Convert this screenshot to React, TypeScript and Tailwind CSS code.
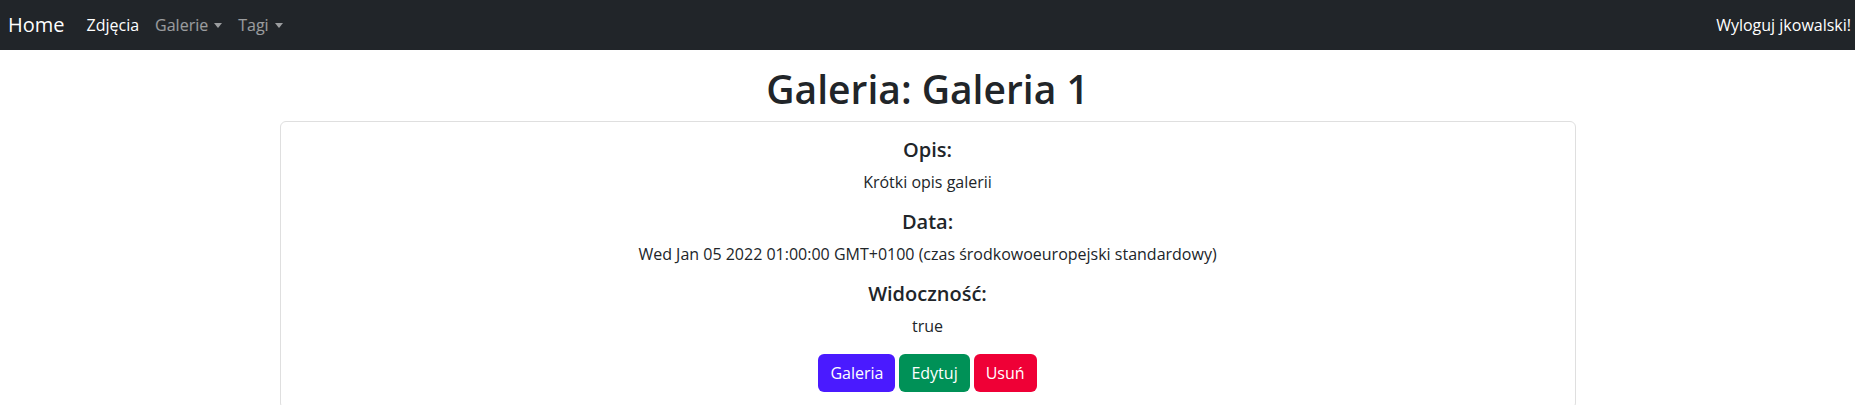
import React from "react";

const font = { fontFamily: '"Open Sans", "Noto Sans", sans-serif' };

function Caret() {
  return (
    <span className="ml-[6px] inline-block h-0 w-0 border-x-[4.5px] border-t-[5px] border-x-transparent border-t-current align-middle" />
  );
}

function Field({ label, value }: { label: string; value: string }) {
  return (
    <>
      <h5 className="mb-2 text-[20px] font-semibold leading-[24px]">{label}</h5>
      <p className="mb-4 text-[16px] leading-[24px]">{value}</p>
    </>
  );
}

export default function App() {
  return (
    <div className="min-h-screen bg-white text-[#212529]" style={font}>
      <nav className="flex h-[50px] items-center justify-between bg-[#212529] pl-2 pr-1">
        <div className="flex items-center">
          <a className="mr-[14px] text-[20px] leading-[30px] text-white">Home</a>
          <a className="px-2 text-[16px] leading-6 text-white">Zdjęcia</a>
          <a className="flex items-center px-2 text-[16px] leading-6 text-white/55">
            Galerie
            <Caret />
          </a>
          <a className="flex items-center px-2 text-[16px] leading-6 text-white/55">
            Tagi
            <Caret />
          </a>
        </div>
        <a className="text-[16px] leading-6 text-white">Wyloguj jkowalski!</a>
      </nav>

      <main className="mx-auto mt-[15px] w-[1320px] px-3">
        <h1 className="mb-2 text-center text-[39px] font-semibold leading-[48px]">
          Galeria: Galeria 1
        </h1>
        <div className="rounded-[6px] border border-[#dfdfdf] p-4 text-center">
          <Field label="Opis:" value="Krótki opis galerii" />
          <Field
            label="Data:"
            value="Wed Jan 05 2022 01:00:00 GMT+0100 (czas środkowoeuropejski standardowy)"
          />
          <Field label="Widoczność:" value="true" />
          <div className="flex justify-center gap-[4px]">
            <button className="h-[38px] rounded-[6px] bg-[#4a1aff] px-3 text-[16px] leading-6 text-white">
              Galeria
            </button>
            <button className="h-[38px] rounded-[6px] bg-[#009157] px-3 text-[16px] leading-6 text-white">
              Edytuj
            </button>
            <button className="h-[38px] rounded-[6px] bg-[#ef0036] px-3 text-[16px] leading-6 text-white">
              Usuń
            </button>
          </div>
        </div>
      </main>
    </div>
  );
}
